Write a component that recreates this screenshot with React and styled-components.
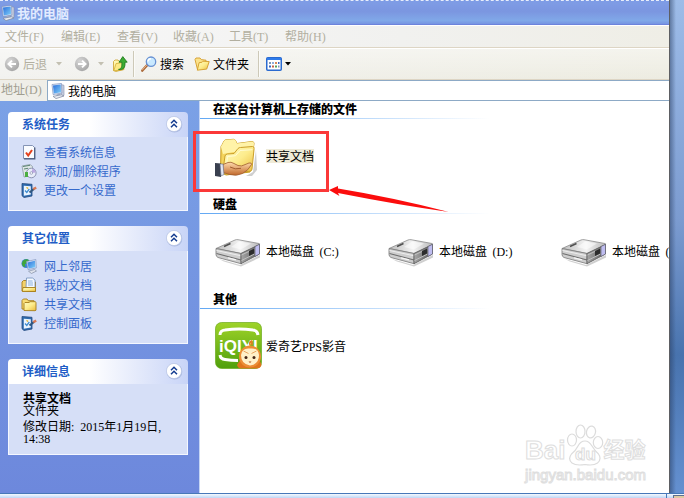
import React from 'react';
import styled, { createGlobalStyle } from 'styled-components';

const GlobalStyle = createGlobalStyle`
  * {
    box-sizing: border-box;
  }

  body {
    margin: 0;
    font-family: 'Noto Sans CJK SC', sans-serif;
    font-size: 12px;
    color: #000;
  }

  button, input {
    font: inherit;
    color: inherit;
  }

  svg {
    display: block;
    flex: none;
  }
`;

const Screen = styled.div`
  min-height: 100vh;
  display: flex;
  flex-direction: column;
  overflow: hidden;
`;

const Desktop = styled.div`
  flex: 1;
  display: flex;
  padding-right: 14px;
  background:
    linear-gradient(to left, transparent 8px, rgba(40, 60, 95, 0.5) 14px),
    linear-gradient(#9dbce8, #7b9bd0 45%, #4873ae 72%, #6490d0);
`;

const Window = styled.div`
  flex: 1;
  min-width: 0;
  display: flex;
  flex-direction: column;
  overflow: hidden;
  border-right: 1px solid #5d5f63;
  background: #fff;
`;

const TitleBar = styled.header`
  height: 25px;
  display: flex;
  align-items: center;
  gap: 1px;
  border-top: 1px dashed #e8eefb;
  border-bottom: 1px solid #6c83dc;
  background: linear-gradient(#7f9de6, #7b96e0 45%, #80a8e8 85%, #7694e2);
`;

const Title = styled.h1`
  margin: 0;
  font-size: 13px;
  line-height: 16px;
  font-weight: 700;
  color: #e2ebff;
`;

const MenuBar = styled.nav`
  height: 23px;
  display: flex;
  align-items: center;
  border-top: 1px solid #fff;
  border-bottom: 1px solid #ddd5c4;
  background: linear-gradient(to right, #f8f8f9, #f1f1ef 60%, #efeee6);
`;

const MenuItem = styled.button`
  width: 56px;
  padding: 0 0 0 5px;
  border: 0;
  background: none;
  line-height: 16px;
  text-align: left;
  white-space: nowrap;
  color: #b2afa0;
`;

const Latin = styled.span`
  font-family: 'Liberation Serif', serif;
`;

const ToolBar = styled.div`
  height: 32px;
  display: flex;
  align-items: center;
  padding-left: 4px;
  border-top: 1px solid #fff;
  border-bottom: 1px solid #ddd5c4;
  background: linear-gradient(rgba(255, 255, 255, 0.4), transparent), linear-gradient(to right, #f2f2ef, #edece1);
`;

const ToolButton = styled.button`
  display: flex;
  align-items: center;
  gap: 3px;
  padding: 0;
  margin-right: ${props => props.$after || 0}px;
  border: 0;
  background: none;
  line-height: 16px;
  white-space: nowrap;
  color: ${props => (props.disabled ? '#b2afa0' : '#000')};
`;

const ToolDivider = styled.span`
  width: 2px;
  height: 26px;
  margin-right: 6px;
  border-left: 1px solid #cdc9b8;
  border-right: 1px solid #fbfbf8;
`;

const AddressBar = styled.div`
  height: 21px;
  display: flex;
  align-items: stretch;
  background: #efeee8;
`;

const AddressLabel = styled.label`
  width: 47px;
  padding-left: 1px;
  line-height: 18px;
  white-space: nowrap;
  color: #a09d8f;
`;

const AddressField = styled.div`
  flex: 1;
  display: flex;
  align-items: center;
  gap: 2px;
  padding-left: 2px;
  border: 1px solid #8daac6;
  border-right: 0;
  background: #fff;
`;

const AddressInput = styled.input`
  flex: 1;
  min-width: 0;
  padding: 0;
  border: 0;
  outline: none;
  line-height: 16px;
  background: none;
`;

const Body = styled.div`
  flex: 1;
  display: flex;
`;

const SideBar = styled.aside`
  width: 200px;
  flex: none;
  display: flex;
  flex-direction: column;
  gap: 15px;
  padding: 11px 11px 16px 8px;
  border-right: 1px solid #c6d6f4;
  background: linear-gradient(#7ba1e6, #6d88dc);
`;

const Panel = styled.section`
  border-radius: 4px 4px 0 0;
  overflow: hidden;
`;

const PanelHeader = styled.div`
  height: 25px;
  display: flex;
  align-items: center;
  justify-content: space-between;
  padding: 0 5px 1px 14px;
  background: linear-gradient(to right, #fff 45%, #c8d4f7);
`;

const PanelTitle = styled.h2`
  margin: 0;
  font-size: 12px;
  line-height: 16px;
  font-weight: 700;
  color: #215dc6;
`;

const CollapseButton = styled.button`
  width: 18px;
  height: 18px;
  padding: 0;
  border: 0;
  background: none;
`;

const PanelBody = styled.div`
  padding: ${props => (props.$text ? '9px 12px' : '5px 12px 11px')};
  border: 1px solid #f4f7ff;
  border-top: 0;
  background: #d6dff7;
`;

const TaskLink = styled.a`
  height: 19px;
  display: flex;
  align-items: center;
  gap: 7px;
  line-height: 16px;
  color: #3569cc;
  text-decoration: none;
`;

const Detail = styled.p`
  margin: ${props => (props.$spaced ? '4px 0 0' : '0')};
  padding-left: 2px;
  font-family: 'Liberation Serif', 'Noto Sans CJK SC', serif;
  font-weight: ${props => (props.$strong ? 700 : 400)};
  line-height: 12px;
`;

const Main = styled.main`
  flex: 1;
  min-width: 0;
  position: relative;
`;

const Group = styled.section`
  height: 95px;
`;

const GroupTitle = styled.h2`
  height: 17px;
  margin: 0;
  padding-left: 13px;
  font-size: 12px;
  line-height: 16px;
  font-weight: 900;
`;

const GroupLine = styled.div`
  height: 1px;
  max-width: 290px;
  background: linear-gradient(to right, #62a8f4, #fff);
`;

const GroupItems = styled.div`
  display: flex;
  padding-left: 15px;
`;

const Item = styled.a`
  position: relative;
  width: 173px;
  height: 74px;
  flex: none;
  display: flex;
  align-items: center;
  gap: 3px;
  line-height: 14px;
  white-space: nowrap;
  color: #000;
  text-decoration: none;
`;

const ItemLabel = styled.span`
  background: ${props => (props.$selected ? '#efebd8' : 'none')};
`;

const Highlight = styled.span`
  position: absolute;
  top: 12px;
  left: -22px;
  width: 136px;
  height: 61px;
  border: 3px solid #fb3838;
`;

const Pointer = styled.svg`
  position: absolute;
  top: 65px;
  left: 114px;
`;

const Watermark = styled.div`
  position: absolute;
  right: 23px;
  bottom: 9px;
  color: #fff;
  font-family: 'Liberation Sans', 'Noto Sans CJK SC', sans-serif;
  -webkit-text-stroke: 1px #dedede;
`;

const WatermarkLogo = styled.div`
  display: flex;
  align-items: flex-end;
  font-size: 26px;
  line-height: 32px;
  font-weight: 700;
`;

const WatermarkCn = styled.span`
  font-size: 21px;
`;

const WatermarkUrl = styled.div`
  font-size: 15px;
  line-height: 18px;
`;

const TaskBar = styled.footer`
  height: 5px;
  display: flex;
  border-top: 1px solid #4778b8;
  background: linear-gradient(#f4f9ff, #bfd6f5);
`;

const TaskBarTray = styled.div`
  width: 18px;
  margin-left: auto;
  padding: 1px 0 0 6px;
  border-left: 1px solid #4778b8;
`;

const TrayIcon = styled.div`
  height: 3px;
  border-top: 1px solid #5b6f90;
  border-left: 1px solid #5b6f90;
  background: #dfc9a4;
`;

const Gradients = styled.svg`
  position: absolute;
`;

const SharedGradients = () => (
  <Gradients width="0" height="0" aria-hidden="true">
    <defs>
      <linearGradient id="folderFill" x1="0" y1="0" x2="1" y2="1">
        <stop offset="0" stopColor="#fffcc4" />
        <stop offset="0.5" stopColor="#fdec8c" />
        <stop offset="1" stopColor="#e9b93a" />
      </linearGradient>
      <linearGradient id="screenFill" x1="0" y1="0" x2="1" y2="1">
        <stop offset="0" stopColor="#2c6fda" />
        <stop offset="1" stopColor="#7fd0fb" />
      </linearGradient>
      <linearGradient id="handFill" x1="0" y1="0" x2="0" y2="1">
        <stop offset="0" stopColor="#ffdcae" />
        <stop offset="1" stopColor="#c0672a" />
      </linearGradient>
      <linearGradient id="driveTop" x1="0" y1="0" x2="1" y2="0">
        <stop offset="0" stopColor="#bcbcbc" />
        <stop offset="0.55" stopColor="#f4f4f4" />
        <stop offset="1" stopColor="#bababa" />
      </linearGradient>
      <linearGradient id="driveFront" x1="0" y1="0" x2="1" y2="0">
        <stop offset="0" stopColor="#a6a6a6" />
        <stop offset="1" stopColor="#5c5c5c" />
      </linearGradient>
      <linearGradient id="appFill" x1="0" y1="0" x2="0" y2="1">
        <stop offset="0" stopColor="#9fd329" />
        <stop offset="1" stopColor="#4f9f0c" />
      </linearGradient>
      <radialGradient id="roundFill" cx="0.35" cy="0.3" r="0.8">
        <stop offset="0" stopColor="#d6d6d6" />
        <stop offset="1" stopColor="#a3a3a3" />
      </radialGradient>
    </defs>
  </Gradients>
);

const ComputerIcon = () => (
  <svg width="16" height="16" viewBox="0 0 16 16">
    <path d="M11 1.5l3 .8v10L11 13.5z" fill="#c9cfdf" stroke="#8490ae" strokeWidth="0.6" />
    <path d="M2 1.500L11.500.4l.4 9.600-8.800 1.600z" fill="#dfe8f8" stroke="#7f93bf" strokeWidth="0.7" />
    <path d="M3 2.400l7.700-.9.300 7.700-7.200 1.200z" fill="url(#screenFill)" />
    <path d="M6.500 11.300l3.500-.6.4 1.800-3.900.6z" fill="#a3aec5" />
    <path d="M3 13.300l8.500-1.500 2.500 1.200-8 2.600z" fill="#e9ecf2" stroke="#7c869f" strokeWidth="0.7" />
  </svg>
);

const RoundArrowIcon = ({ flip }) => (
  <svg width="16" height="16" viewBox="0 0 16 16">
    <circle cx="8" cy="8" r="7.2" fill="url(#roundFill)" />
    <path
      d={flip ? 'M4 8h7M8 4.6L11.5 8 8 11.4' : 'M12 8H5M8 4.6L4.5 8 8 11.4'}
      fill="none"
      stroke="#fff"
      strokeWidth="2"
    />
  </svg>
);

const CaretIcon = ({ color = '#c3c0b1' }) => (
  <svg width="6" height="4" viewBox="0 0 6 4">
    <path d="M0 0h6L3 3.5z" fill={color} />
  </svg>
);

const FolderUpIcon = () => (
  <svg width="16" height="16" viewBox="0 0 16 16">
    <path d="M1.5 14.5v-9L3 4h3l1.3 1.5H11l1 8L4 15.4z" fill="url(#folderFill)" stroke="#c99f2a" strokeWidth="0.8" />
    <path d="M1.8 14.8L4 7.6l8.4-1.200-1 7.200z" fill="#fdea84" stroke="#d0a731" strokeWidth="0.7" />
    <path d="M6.500 13.400c3-.5 3.600-2.700 3.300-7.200H7L10.800.6l4.400 5.600H13c.4 5.500-1.500 8-6.500 7.200z" fill="#3cab33" stroke="#1a7619" strokeWidth="0.8" />
  </svg>
);

const SearchIcon = () => (
  <svg width="16" height="16" viewBox="0 0 16 16">
    <path d="M1.300 14.500l5-5.500" stroke="#a9683a" strokeWidth="2.600" strokeLinecap="round" />
    <path d="M1.300 14l5-5.500" stroke="#eab384" strokeWidth="1" strokeLinecap="round" />
    <circle cx="10" cy="5.700" r="4.700" fill="#c9e9ff" stroke="#6891d2" strokeWidth="1.300" />
    <path d="M7 5.500a3 3 0 0 1 3-2.800" fill="none" stroke="#fff" strokeWidth="1.400" />
  </svg>
);

const OpenFolderIcon = () => (
  <svg width="16" height="16" viewBox="0 0 16 16">
    <path d="M1 3.500l1-1.500h4l1.300 1.600 4.700.6v3L3.500 13.500z" fill="#fbe28a" stroke="#d29b28" strokeWidth="0.9" />
    <path d="M3.300 14.200l1.800-7.500 3-.5.900-1 6.200.4-2.500 7.500z" fill="url(#folderFill)" stroke="#d29b28" strokeWidth="0.9" />
  </svg>
);

const ViewsIcon = () => (
  <svg width="16" height="14" viewBox="0 0 16 14">
    <rect x="0.750" y="0.750" width="14.500" height="12.500" rx="1" fill="#fff" stroke="#2a6ad0" strokeWidth="1.500" />
    <path d="M1 1h14v2H1z" fill="#2f7bea" />
    <path d="M3 5h2v2H3zM12 8.500h1.500v2H12z" fill="#7e95b5" />
    <path d="M6 5h2v2H6z" fill="#8fb0dc" />
    <path d="M9 5h2v2H9z" fill="#d78a58" />
    <path d="M12 5h1.500v2H12zM3 8.500h2v2H3z" fill="#3b66c0" />
    <path d="M6 8.500h2v2H6z" fill="#c2654b" />
    <path d="M9 8.500h2v2H9z" fill="#54a35a" />
  </svg>
);

const CollapseIcon = () => (
  <svg width="18" height="18" viewBox="0 0 18 18">
    <circle cx="9.500" cy="9.800" r="7.800" fill="#94a6d3" opacity="0.600" />
    <circle cx="9" cy="9" r="7.600" fill="#fff" stroke="#b5c2e3" strokeWidth="0.700" />
    <path d="M6 8.300l3-3 3 3M6 12.300l3-3 3 3" fill="none" stroke="#183f91" strokeWidth="1.500" />
  </svg>
);

const InfoIcon = () => (
  <svg width="16" height="16" viewBox="0 0 16 16">
    <path d="M2.500 1.500h9l2 2v11h-11z" fill="#fafcff" stroke="#8494b5" />
    <path d="M13.800 3.500v11.300H3" fill="none" stroke="#4a5878" strokeWidth="1.200" />
    <path d="M5 8.500l2.200 3L11 6" fill="none" stroke="#e3421e" strokeWidth="2.100" />
  </svg>
);

const ProgramsIcon = () => (
  <svg width="16" height="16" viewBox="0 0 16 16">
    <path d="M1 3l8-1.500 2.500 2V12L3 14z" fill="#dde6e6" stroke="#8c9ba5" strokeWidth="0.800" />
    <path d="M2 3.500l7-1.200M3 6l4-.7" stroke="#5d8572" strokeWidth="1" />
    <circle cx="10.300" cy="10" r="4.800" fill="#e9eef9" stroke="#8189a9" strokeWidth="0.900" />
    <path d="M10.300 10l1.300-4.600a4.800 4.800 0 0 1 3.300 4z" fill="#bba9e0" />
    <path d="M4 9h3v5H4z" fill="#4bae43" />
    <circle cx="10.300" cy="10" r="1.300" fill="#fff" stroke="#7783a5" strokeWidth="0.600" />
  </svg>
);

const SettingsIcon = () => (
  <svg width="16" height="16" viewBox="0 0 16 16">
    <path d="M1 1.500l10 .8V14l-8 1.500L1 13.700z" fill="#2f6cb0" stroke="#244a7e" strokeWidth="0.800" />
    <path d="M2.800 3.800l7 .5v8.300l-7 1.200z" fill="#eaf4ff" />
    <path d="M4 8.500l1.800 2L8.300 7" fill="none" stroke="#3f8cd0" strokeWidth="1.300" />
    <path d="M8.500 10.500l5-4" stroke="#31577f" strokeWidth="2.200" />
    <path d="M12.300 7.300L15.200 5.400" stroke="#d97a55" strokeWidth="2.400" />
    <path d="M5.500 5.300l1.500 1.300" stroke="#e2bb48" strokeWidth="1.400" />
  </svg>
);

const NetworkIcon = () => (
  <svg width="16" height="16" viewBox="0 0 16 16">
    <circle cx="5" cy="5.500" r="4.500" fill="#3b83d9" />
    <path d="M1.500 3.500C3 1 6 .8 8 2L6.500 5 3.800 6.200 4.500 9 2 8.500.8 6z" fill="#3fa63c" />
    <path d="M5.500 3.500l9.300-2L15.300 10l-8.300 1.500z" fill="#dbe6fa" stroke="#8297bf" strokeWidth="0.700" />
    <path d="M6.400 4.400l7.500-1.700.5 6.500-6.700 1.200z" fill="url(#screenFill)" />
    <path d="M7.500 13.200l6-1.700 2 1.500-5 2.500z" fill="#dde2ec" stroke="#848fa8" strokeWidth="0.700" />
  </svg>
);

const DocumentsIcon = () => (
  <svg width="16" height="16" viewBox="0 0 16 16">
    <path d="M1 14V5l1.500-1.500H6L7 5h7.500v9.500H2z" fill="#f3d26a" stroke="#a67e1b" strokeWidth="0.900" />
    <path d="M5.500 1h6L14 3v8H5z" fill="#f4f9ff" stroke="#6f8db8" strokeWidth="0.800" />
    <path d="M7 4h4.500M7 6h5M7 8h5" stroke="#7fa8da" strokeWidth="0.900" />
    <path d="M1.300 14.300L2 10.500h12.500v4z" fill="url(#folderFill)" stroke="#a67e1b" strokeWidth="0.900" />
  </svg>
);

const FolderIcon = () => (
  <svg width="16" height="16" viewBox="0 0 16 16">
    <path d="M1 13V4.500L2.300 3H6l1.200 1.700H13v9z" fill="#f9dc73" stroke="#a67e1b" strokeWidth="0.900" />
    <path d="M3 14.500V7.500L4 6.500h4L9 5.700h5.500l.5 1v7.500l-1 .5z" fill="url(#folderFill)" stroke="#a67e1b" strokeWidth="0.900" />
  </svg>
);

const SharedFolderIcon = () => (
  <svg width="48" height="48" viewBox="0 0 48 48">
    <g transform="translate(0 4)">
      <path d="M31 40l7-4 3-22 1 20-5 6z" fill="#888" opacity="0.400" />
      <path d="M5.500 36L6 11Q6 9.500 7 9l2-4q.6-1 2-1.200l7.500-.5q1.500 0 2 1.200l1.500 3L37 5.500q2 0 2 2L35 36l-24 3z" fill="#f4d45d" stroke="#c79a20" />
      <path d="M6 11q0-1.500 1-2l2-4q.6-1 2-1.200l7.500-.5q1.500 0 2 1.200l1.500 3L37 5.500q2 0 2 2l-.5 5L8 18z" fill="#fff3a8" />
      <path d="M8 34l2-14q.5-2 2.500-2l6.500-.5 4-5q1-1 2.500-1l12-1q1.800 0 1.600 2L37 33q0 2-2 2.200L10 38q-2 0-2-2z" fill="url(#folderFill)" stroke="#cb9f29" />
      <path d="M11 34l1.500-13.500 8-.8 4.500-5.200 12.500-.8" fill="none" stroke="#fffcd4" />
      <path d="M8 28.500l5-2q3-1 6 1l4 2q4 1 6-.5l5-2q3-.5 2.500 1.500-3 6-9 9-6 3-13 1l-6.500-2z" fill="url(#handFill)" stroke="#9e5c2d" strokeWidth="0.800" />
      <path d="M15 31q5 3 11 1.300" fill="none" stroke="#a15e31" />
      <path d="M0 27l6 .5v13.500l-6-1z" fill="#39404f" />
      <path d="M5 28h3l1 10.500L6 40z" fill="#e2e6f2" stroke="#646b80" strokeWidth="0.600" />
    </g>
  </svg>
);

const DriveIcon = () => (
  <svg width="48" height="48" viewBox="0 0 48 48">
    <path d="M4 32l21 6 20-10v2.500L26 39.500 9 34.500z" fill="#888" opacity="0.400" />
    <path d="M1 21.500L20 13q1.500-.6 3-.3L44 16.500q1 .3.500 1L26 26.500z" fill="url(#driveTop)" stroke="#8a8a8a" strokeWidth="0.800" />
    <path d="M1 21.500l25 5v10.200L3 30.500q-2-1-2-3z" fill="#cecece" stroke="#777" strokeWidth="0.800" />
    <path d="M1.500 26.500L26 33" fill="none" stroke="#6f6f6f" strokeWidth="1.100" />
    <path d="M1.500 23.500l24 5.200" fill="none" stroke="#ededed" />
    <path d="M26 26.500l18.500-9v9.500L26 36.700z" fill="url(#driveFront)" stroke="#5a5a5a" strokeWidth="0.800" />
    <path d="M26.500 28l13-6.200M26.500 33.500l13-6.500" stroke="#c4c4c4" strokeWidth="0.900" />
    <path d="M40 19.500l4.500-2.200v9.700L40 29.500z" fill="#bfbdf0" stroke="#61616f" strokeWidth="0.700" />
    <path d="M34 24l5-2.500v5L34 29z" fill="#2c2c2c" />
    <path d="M9 19.500l6.500-3" stroke="#4f4f4f" strokeWidth="1.500" />
    <path d="M16 20l8-5.500 12 2-10 6z" fill="#fff" opacity="0.500" />
    <path d="M13 30.800l8 2" stroke="#f7f7f7" strokeWidth="1.300" />
  </svg>
);

const AppIcon = () => (
  <svg width="48" height="48" viewBox="0 0 48 48">
    <rect x="0.500" y="0.500" width="46" height="46" rx="6" fill="url(#appFill)" stroke="#6bab1c" strokeWidth="0.700" />
    <path d="M5 13Q5 8.500 10 8q14-2 28 0 4.500.5 5 5M5 33q.5 4 5 4.500 6 1 13 1" fill="none" stroke="#fff" strokeWidth="3" />
    <text x="4" y="30" fill="#fff" fontFamily="'Liberation Sans', sans-serif" fontSize="17" fontWeight="700">iQIYI</text>
    <path d="M22 43q2-4 4-5h18q2 2 2.500 5-1 3.500-5 3.500H26q-3 0-4-3.500z" fill="#df741b" />
    <path d="M35 23q-1-3 1.500-4 1 2 .5 4" fill="none" stroke="#e47b24" strokeWidth="1.500" />
    <circle cx="35" cy="34.500" r="11" fill="#ec8d35" />
    <path d="M35 26.500q8-1 9 6.500 0 9-9 10.500-9-1.500-9-10.500 1-7.500 9-6.500z" fill="#fff0c8" />
    <path d="M28.500 29l5 2.500M41.500 29l-5 2.500" stroke="#e8a661" strokeWidth="1" />
    <circle cx="31" cy="35.500" r="1.500" fill="#442718" />
    <circle cx="39" cy="35.500" r="1.500" fill="#442718" />
    <path d="M33.500 39.500h3L35 41z" fill="#a94c20" />
  </svg>
);

const PawIcon = () => (
  <svg width="38" height="42" viewBox="0 0 38 42" fill="#fff" stroke="#dcdcdc" strokeWidth="1.200">
    <ellipse cx="6" cy="16" rx="4.500" ry="6" />
    <ellipse cx="14.500" cy="7.500" rx="4.500" ry="6.500" />
    <ellipse cx="25" cy="8" rx="4.500" ry="6" transform="rotate(12 25 8)" />
    <ellipse cx="32" cy="18.500" rx="4.700" ry="6" />
    <path d="M19 17q4 0 7 5t6.500 8q3.500 5-1 9-4 3-12.500 1.500Q10 42 6 39q-4.500-4-.5-9 4-3 6.500-8t7-5z" />
    <text x="9" y="36" fontFamily="'Liberation Sans', sans-serif" fontSize="17" fontWeight="700" strokeWidth="1">du</text>
  </svg>
);

const menus = [
  { name: '文件', mnemonic: 'F' },
  { name: '编辑', mnemonic: 'E' },
  { name: '查看', mnemonic: 'V' },
  { name: '收藏', mnemonic: 'A' },
  { name: '工具', mnemonic: 'T' },
  { name: '帮助', mnemonic: 'H' }
];

const systemTasks = [
  { name: '查看系统信息', icon: InfoIcon },
  { name: '添加/删除程序', icon: ProgramsIcon },
  { name: '更改一个设置', icon: SettingsIcon }
];

const otherPlaces = [
  { name: '网上邻居', icon: NetworkIcon },
  { name: '我的文档', icon: DocumentsIcon },
  { name: '共享文档', icon: FolderIcon },
  { name: '控制面板', icon: SettingsIcon }
];

const drives = ['C', 'D', 'E'];

const SidePanel = ({ title, text, children }) => (
  <Panel>
    <PanelHeader>
      <PanelTitle>{title}</PanelTitle>
      <CollapseButton type="button" aria-label={title}>
        <CollapseIcon />
      </CollapseButton>
    </PanelHeader>
    <PanelBody $text={text}>{children}</PanelBody>
  </Panel>
);

const TaskList = ({ tasks }) =>
  tasks.map((task) => (
    <TaskLink key={task.name} href="#">
      <task.icon />
      {task.name}
    </TaskLink>
  ));

const FileGroup = ({ title, children }) => (
  <Group>
    <GroupTitle>{title}</GroupTitle>
    <GroupLine />
    <GroupItems>{children}</GroupItems>
  </Group>
);

const App = () => (
  <Screen>
    <GlobalStyle />
    <SharedGradients />
    <Desktop>
      <Window>
        <TitleBar>
          <ComputerIcon />
          <Title>我的电脑</Title>
        </TitleBar>

        <MenuBar>
          {menus.map((menu) => (
            <MenuItem key={menu.name} type="button">
              {menu.name}
              <Latin>({menu.mnemonic})</Latin>
            </MenuItem>
          ))}
        </MenuBar>

        <ToolBar>
          <ToolButton type="button" disabled $after={9}>
            <RoundArrowIcon />
            后退
          </ToolButton>
          <ToolButton type="button" disabled aria-label="后退" $after={12}>
            <CaretIcon />
          </ToolButton>
          <ToolButton type="button" disabled aria-label="前进" $after={8}>
            <RoundArrowIcon flip />
          </ToolButton>
          <ToolButton type="button" disabled aria-label="前进" $after={8}>
            <CaretIcon />
          </ToolButton>
          <ToolButton type="button" aria-label="向上" $after={5}>
            <FolderUpIcon />
          </ToolButton>
          <ToolDivider />
          <ToolButton type="button" $after={10}>
            <SearchIcon />
            搜索
          </ToolButton>
          <ToolButton type="button" $after={9}>
            <OpenFolderIcon />
            文件夹
          </ToolButton>
          <ToolDivider />
          <ToolButton type="button" aria-label="查看">
            <ViewsIcon />
            <CaretIcon color="#000" />
          </ToolButton>
        </ToolBar>

        <AddressBar>
          <AddressLabel htmlFor="address">
            地址<Latin>(D)</Latin>
          </AddressLabel>
          <AddressField>
            <ComputerIcon />
            <AddressInput id="address" type="text" defaultValue="我的电脑" />
          </AddressField>
        </AddressBar>

        <Body>
          <SideBar>
            <SidePanel title="系统任务">
              <TaskList tasks={systemTasks} />
            </SidePanel>
            <SidePanel title="其它位置">
              <TaskList tasks={otherPlaces} />
            </SidePanel>
            <SidePanel title="详细信息" text>
              <Detail $strong>共享文档</Detail>
              <Detail>文件夹</Detail>
              <Detail $spaced>修改日期: &nbsp;2015年1月19日, 14:38</Detail>
            </SidePanel>
          </SideBar>

          <Main>
            <FileGroup title="在这台计算机上存储的文件">
              <Item href="#">
                <SharedFolderIcon />
                <ItemLabel $selected>共享文档</ItemLabel>
                <Highlight />
                <Pointer width="122" height="28" viewBox="0 0 122 28">
                  <path d="M0 6L9 2v2.500q55 9 111 23.500Q70 21 9 9l1.500 3z" fill="#fb0d0d" />
                </Pointer>
              </Item>
            </FileGroup>
            <FileGroup title="硬盘">
              {drives.map((letter) => (
                <Item key={letter} href="#">
                  <DriveIcon />
                  <ItemLabel>
                    本地磁盘 &nbsp;<Latin>({letter}:)</Latin>
                  </ItemLabel>
                </Item>
              ))}
            </FileGroup>
            <FileGroup title="其他">
              <Item href="#">
                <AppIcon />
                <ItemLabel>
                  爱奇艺<Latin>PPS</Latin>影音
                </ItemLabel>
              </Item>
            </FileGroup>
            <Watermark>
              <WatermarkLogo>
                Bai
                <PawIcon />
                <WatermarkCn>经验</WatermarkCn>
              </WatermarkLogo>
              <WatermarkUrl>jingyan.baidu.com</WatermarkUrl>
            </Watermark>
          </Main>
        </Body>
      </Window>
    </Desktop>
    <TaskBar>
      <TaskBarTray>
        <TrayIcon />
      </TaskBarTray>
    </TaskBar>
  </Screen>
);

export default App;
